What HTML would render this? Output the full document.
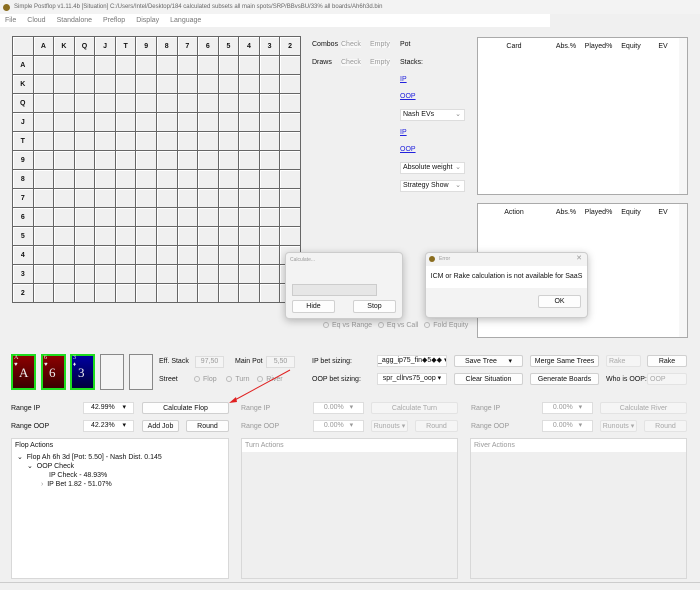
<!DOCTYPE html><html><head><style>
*{box-sizing:border-box;margin:0;padding:0}
body{width:700px;height:590px;background:#f0f0f0;font-family:"Liberation Sans",sans-serif;font-size:7px;color:#111;position:relative;overflow:hidden;white-space:nowrap}
.a{position:absolute}
.btn{position:absolute;background:#fdfdfd;border:1px solid #d0d0d0;border-radius:2px;text-align:center;line-height:11px;height:12px;overflow:hidden}
.dis{color:#a8a8a8;background:#f5f5f5;border-color:#e3e3e3}
.g{color:#999}
.fld{position:absolute;background:#fff;border:1px solid #ddd;height:12px;line-height:10px;text-align:center;overflow:hidden}
table.grid{position:absolute;left:12px;top:36px;border-collapse:collapse;table-layout:fixed;border:1px solid #444}
table.grid td{width:20.57px;height:19px;border:1px solid #666;box-shadow:inset 1px 1px #fff;text-align:center;font-weight:bold;font-size:7px;padding:0}
.card{position:absolute;top:354px;width:25px;height:36px;border:2px solid #1fdc1f;color:#eee;font-family:"Liberation Serif",serif}
.card .s{position:absolute;left:1px;top:-1px;font-size:6px}
.card .b{position:absolute;left:6px;top:9px;font-size:13px}
.panel{position:absolute;top:438px;height:141px;border:1px solid #d8d8d8}
.ph{height:13px;line-height:13px;padding-left:3px;background:#fff}
.tbl{position:absolute;left:477px;width:211px;background:#fff;border:1px solid #aaa}
.hd{position:absolute;top:5px;text-align:center}
.dlg{position:absolute;background:#f3f3f3;border:1px solid #ccc;border-radius:4px;box-shadow:0 2px 8px rgba(0,0,0,.25)}
.rd{display:inline-block;width:6px;height:6px;border:1px solid #bbb;border-radius:50%;vertical-align:-1px;margin-right:3px}
</style></head><body>
<div class="a" style="left:0;top:0;width:700px;height:14px;background:#f3f3f3;font-size:6px;color:#666;line-height:14px;padding-left:14px">Simple Postflop v1.11.4b [Situation] C:/Users/Intel/Desktop/184 calculated subsets all main spots/SRP/BBvsBU/33% all boards/Ah6h3d.bin</div>
<div class="a" style="left:3px;top:4px;width:7px;height:7px;border-radius:50%;background:#8a6d1f"></div>
<div class="a" style="left:0;top:14px;width:550px;height:13px;background:#fff;color:#777;line-height:13px"><span style="margin-left:5px">File</span><span style="margin-left:11px">Cloud</span><span style="margin-left:11px">Standalone</span><span style="margin-left:11px">Preflop</span><span style="margin-left:11px">Display</span><span style="margin-left:11px">Language</span></div>
<table class="grid">
<tr><td></td><td>A</td><td>K</td><td>Q</td><td>J</td><td>T</td><td>9</td><td>8</td><td>7</td><td>6</td><td>5</td><td>4</td><td>3</td><td>2</td></tr>
<tr><td>A</td><td></td><td></td><td></td><td></td><td></td><td></td><td></td><td></td><td></td><td></td><td></td><td></td><td></td></tr>
<tr><td>K</td><td></td><td></td><td></td><td></td><td></td><td></td><td></td><td></td><td></td><td></td><td></td><td></td><td></td></tr>
<tr><td>Q</td><td></td><td></td><td></td><td></td><td></td><td></td><td></td><td></td><td></td><td></td><td></td><td></td><td></td></tr>
<tr><td>J</td><td></td><td></td><td></td><td></td><td></td><td></td><td></td><td></td><td></td><td></td><td></td><td></td><td></td></tr>
<tr><td>T</td><td></td><td></td><td></td><td></td><td></td><td></td><td></td><td></td><td></td><td></td><td></td><td></td><td></td></tr>
<tr><td>9</td><td></td><td></td><td></td><td></td><td></td><td></td><td></td><td></td><td></td><td></td><td></td><td></td><td></td></tr>
<tr><td>8</td><td></td><td></td><td></td><td></td><td></td><td></td><td></td><td></td><td></td><td></td><td></td><td></td><td></td></tr>
<tr><td>7</td><td></td><td></td><td></td><td></td><td></td><td></td><td></td><td></td><td></td><td></td><td></td><td></td><td></td></tr>
<tr><td>6</td><td></td><td></td><td></td><td></td><td></td><td></td><td></td><td></td><td></td><td></td><td></td><td></td><td></td></tr>
<tr><td>5</td><td></td><td></td><td></td><td></td><td></td><td></td><td></td><td></td><td></td><td></td><td></td><td></td><td></td></tr>
<tr><td>4</td><td></td><td></td><td></td><td></td><td></td><td></td><td></td><td></td><td></td><td></td><td></td><td></td><td></td></tr>
<tr><td>3</td><td></td><td></td><td></td><td></td><td></td><td></td><td></td><td></td><td></td><td></td><td></td><td></td><td></td></tr>
<tr><td>2</td><td></td><td></td><td></td><td></td><td></td><td></td><td></td><td></td><td></td><td></td><td></td><td></td><td></td></tr>
</table>
<div class="a" style="left:312px;top:41px">Combos</div><div class="a g" style="left:341px;top:41px;background:#f8f8f8">Check</div><div class="a g" style="left:370px;top:41px;background:#f8f8f8">Empty</div><div class="a" style="left:400px;top:41px">Pot</div>
<div class="a" style="left:312px;top:59px">Draws</div><div class="a g" style="left:341px;top:59px;background:#f8f8f8">Check</div><div class="a g" style="left:370px;top:59px;background:#f8f8f8">Empty</div><div class="a" style="left:400px;top:59px">Stacks:</div>
<div class="a" style="left:400px;top:76px;color:#22d;text-decoration:underline">IP</div>
<div class="a" style="left:400px;top:93px;color:#22d;text-decoration:underline">OOP</div>
<div class="fld" style="left:400px;top:109px;width:65px;text-align:left;padding-left:2px">Nash EVs<span style="float:right;margin-right:3px;color:#888">⌄</span></div>
<div class="a" style="left:400px;top:129px;color:#22d;text-decoration:underline">IP</div>
<div class="a" style="left:400px;top:146px;color:#22d;text-decoration:underline">OOP</div>
<div class="fld" style="left:400px;top:162px;width:65px;text-align:left;padding-left:2px">Absolute weight<span style="float:right;margin-right:3px;color:#888">⌄</span></div>
<div class="fld" style="left:400px;top:180px;width:65px;text-align:left;padding-left:2px">Strategy Show<span style="float:right;margin-right:3px;color:#888">⌄</span></div>
<div class="tbl" style="top:37px;height:158px"><div class="hd" style="left:0;width:72px">Card</div><div class="hd" style="left:72px;width:32px">Abs.%</div><div class="hd" style="left:104px;width:33px">Played%</div><div class="hd" style="left:137px;width:32px">Equity</div><div class="hd" style="left:169px;width:32px">EV</div><div class="a" style="right:0;top:0;width:8px;height:100%;background:#f7f7f7"></div></div>
<div class="tbl" style="top:203px;height:135px"><div class="hd" style="left:0;width:72px">Action</div><div class="hd" style="left:72px;width:32px">Abs.%</div><div class="hd" style="left:104px;width:33px">Played%</div><div class="hd" style="left:137px;width:32px">Equity</div><div class="hd" style="left:169px;width:32px">EV</div><div class="a" style="right:0;top:0;width:8px;height:100%;background:#f7f7f7"></div></div>
<div class="a g" style="left:323px;top:322px"><span class="rd"></span>Eq vs Range &nbsp; <span class="rd"></span>Eq vs Call &nbsp; <span class="rd"></span>Fold Equity</div>
<div class="dlg" style="left:285px;top:252px;width:118px;height:67px"><div class="a g" style="left:4px;top:4px;font-size:5px">Calculate...</div><div class="a" style="left:6px;top:31px;width:85px;height:12px;background:#e6e6e6;border:1px solid #ccc"></div><div class="btn" style="left:6px;top:47px;width:43px;height:13px">Hide</div><div class="btn" style="left:67px;top:47px;width:43px;height:13px">Stop</div></div>
<div class="dlg" style="left:425px;top:252px;width:163px;height:66px"><div class="a" style="left:0;top:0;width:100%;height:13px;background:#f3f3f3;border-radius:4px 4px 0 0"><span style="position:absolute;left:3px;top:3px;width:6px;height:6px;border-radius:50%;background:#8a6d1f"></span><span class="g" style="position:absolute;left:13px;top:3px;font-size:5px">Error</span><span style="position:absolute;right:5px;top:1px;color:#999">✕</span></div><div class="a" style="left:0;top:13px;width:100%;height:22px;background:#fff;line-height:22px;text-align:center">ICM or Rake calculation is not available for SaaS</div><div class="btn" style="left:112px;top:42px;width:43px;height:13px">OK</div></div>
<div class="card" style="left:11px;background:linear-gradient(#8c0000,#3a0000)"><span class="s">A</span><span class="a" style="left:1px;top:6px;font-size:6px">♥</span><span class="b">A</span></div>
<div class="card" style="left:41px;background:linear-gradient(#8c0000,#3a0000)"><span class="s">6</span><span class="a" style="left:1px;top:6px;font-size:6px">♥</span><span class="b">6</span></div>
<div class="card" style="left:70px;background:linear-gradient(#0000a0,#00003c)"><span class="s">3</span><span class="a" style="left:1px;top:6px;font-size:6px">♦</span><span class="b">3</span></div>
<div class="a" style="left:100px;top:354px;width:24px;height:36px;border:1px solid #888;background:#f4f4f4"></div>
<div class="a" style="left:129px;top:354px;width:24px;height:36px;border:1px solid #888;background:#f4f4f4"></div>
<div class="a" style="left:159px;top:358px">Eff. Stack</div><div class="fld g" style="left:195px;top:356px;width:29px;background:#f4f4f4">97,50</div>
<div class="a" style="left:235px;top:358px">Main Pot</div><div class="fld g" style="left:266px;top:356px;width:29px;background:#f4f4f4">5,50</div>
<div class="a" style="left:159px;top:376px">Street</div><div class="a g" style="left:194px;top:376px"><span class="rd"></span>Flop &nbsp;&nbsp;&nbsp; <span class="rd"></span>Turn &nbsp;&nbsp; <span class="rd"></span>River</div>
<div class="a" style="left:312px;top:358px">IP bet sizing:</div><div class="fld" style="left:377px;top:355px;width:70px">_agg_ip75_fin◆5◆◆ ▾</div>
<div class="a" style="left:312px;top:376px">OOP bet sizing:</div><div class="fld" style="left:377px;top:373px;width:70px">spr_cllrvs75_oop ▾</div>
<div class="btn" style="left:454px;top:355px;width:69px">Save Tree &nbsp;&nbsp;&nbsp;&nbsp;&nbsp;▾</div>
<div class="btn" style="left:454px;top:373px;width:69px">Clear Situation</div>
<div class="btn" style="left:530px;top:355px;width:69px">Merge Same Trees</div>
<div class="btn" style="left:530px;top:373px;width:69px">Generate Boards</div>
<div class="btn dis" style="left:606px;top:355px;width:35px;text-align:left;padding-left:2px">Rake</div>
<div class="a" style="left:606px;top:376px">Who is OOP:</div><div class="btn dis" style="left:647px;top:373px;width:40px;text-align:left;padding-left:2px">OOP</div>
<div class="btn" style="left:647px;top:355px;width:40px">Rake</div>
<div class="a" style="left:11px;top:405px">Range IP</div><div class="fld" style="left:83px;top:402px;width:51px">42.99% &nbsp;&nbsp;&nbsp;▾</div><div class="btn" style="left:142px;top:402px;width:87px">Calculate Flop</div>
<div class="a" style="left:11px;top:423px">Range OOP</div><div class="fld" style="left:83px;top:420px;width:51px">42.23% &nbsp;&nbsp;&nbsp;▾</div><div class="btn" style="left:142px;top:420px;width:37px">Add Job</div><div class="btn" style="left:186px;top:420px;width:43px">Round</div>
<div class="a g" style="left:241px;top:405px">Range IP</div><div class="fld g" style="left:313px;top:402px;width:51px">0.00% &nbsp;&nbsp;▾</div><div class="btn dis" style="left:371px;top:402px;width:87px">Calculate Turn</div>
<div class="a g" style="left:241px;top:423px">Range OOP</div><div class="fld g" style="left:313px;top:420px;width:51px">0.00% &nbsp;&nbsp;▾</div><div class="btn dis" style="left:371px;top:420px;width:37px">Runouts ▾</div><div class="btn dis" style="left:415px;top:420px;width:43px">Round</div>
<div class="a g" style="left:471px;top:405px">Range IP</div><div class="fld g" style="left:542px;top:402px;width:51px">0.00% &nbsp;&nbsp;▾</div><div class="btn dis" style="left:600px;top:402px;width:87px">Calculate River</div>
<div class="a g" style="left:471px;top:423px">Range OOP</div><div class="fld g" style="left:542px;top:420px;width:51px">0.00% &nbsp;&nbsp;▾</div><div class="btn dis" style="left:600px;top:420px;width:37px">Runouts ▾</div><div class="btn dis" style="left:644px;top:420px;width:43px">Round</div>
<div class="panel" style="left:11px;width:218px;background:#fff"><div class="ph">Flop Actions</div>
<div class="a" style="left:5px;top:14px">⌄ &nbsp;Flop Ah 6h 3d [Pot: 5.50] - Nash Dist. 0.145</div>
<div class="a" style="left:15px;top:23px">⌄ &nbsp;OOP Check</div>
<div class="a" style="left:37px;top:33px">IP Check - 48.93%</div>
<div class="a" style="left:29px;top:42px"><span class="g">›</span> &nbsp;IP Bet 1.82 - 51.07%</div></div>
<div class="panel g" style="left:241px;width:217px;background:#efefef"><div class="ph">Turn Actions</div></div>
<div class="panel g" style="left:470px;width:217px;background:#efefef"><div class="ph">River Actions</div></div>
<div class="a" style="left:0;top:582px;width:700px;height:1px;background:#ccc"></div>
<svg class="a" style="left:0;top:0" width="700" height="590"><line x1="290" y1="370" x2="233" y2="401" stroke="#e02020" stroke-width="1"/><polygon points="229,403 236,397 237,402" fill="#e02020"/></svg>
</body></html>
